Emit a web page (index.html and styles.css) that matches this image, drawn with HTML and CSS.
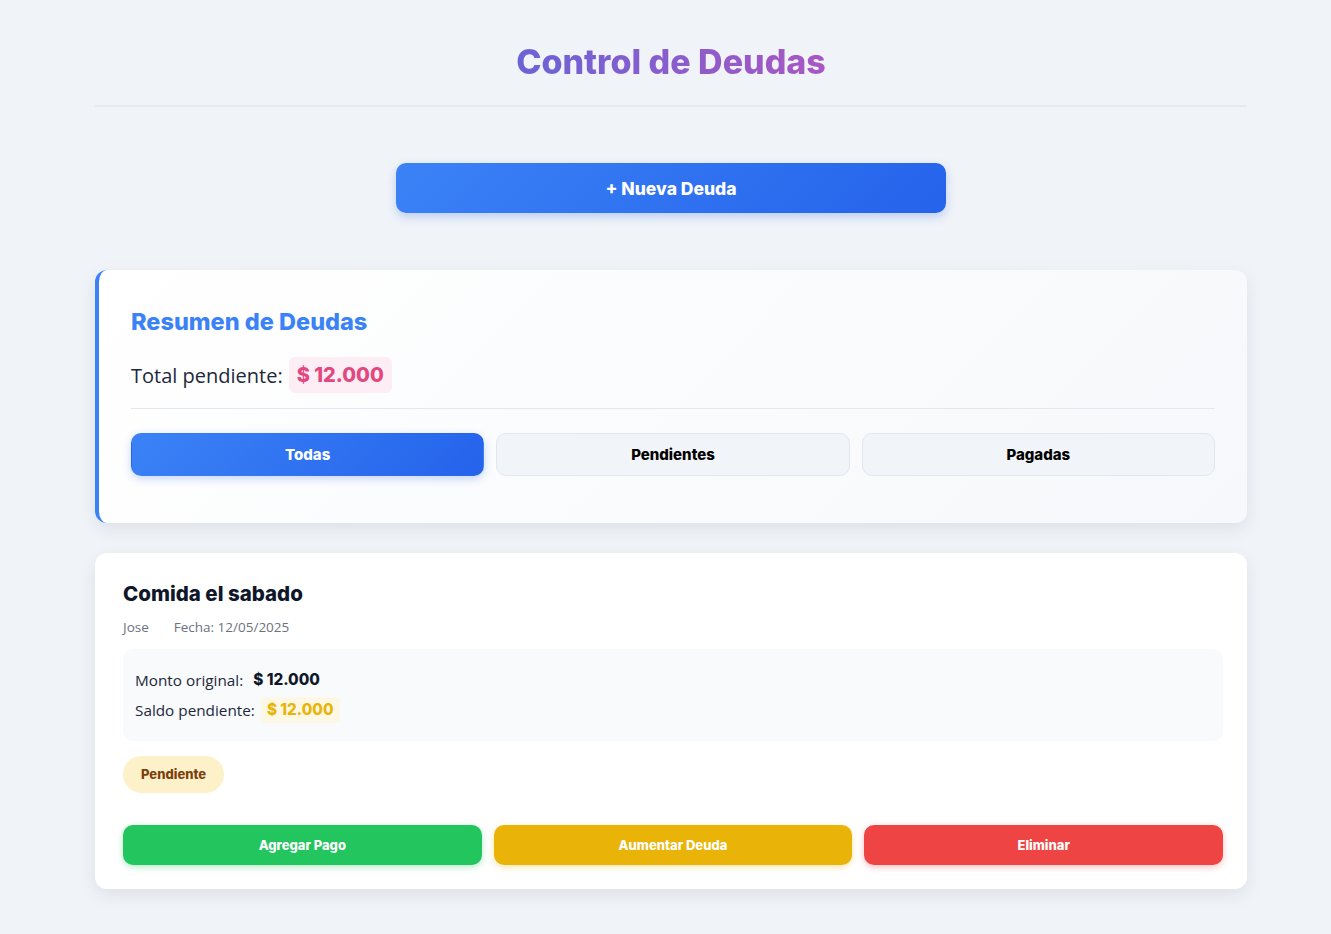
FILE: index.html
```html
<!DOCTYPE html>
<html lang="es">
<head>
<meta charset="utf-8">
<title>Control de Deudas</title>
<link rel="stylesheet" href="styles.css">
</head>
<body>
<div class="container">
  <header class="header">
    <h1 class="title">Control de Deudas</h1>
  </header>
  <div class="new-wrap">
    <button class="btn-new">+ Nueva Deuda</button>
  </div>
  <section class="summary">
    <h2 class="summary-title">Resumen de Deudas</h2>
    <div class="total-row">
      <span class="total-label">Total pendiente:</span>
      <span class="total-amount">$ 12.000</span>
    </div>
    <div class="filters">
      <button class="filter active">Todas</button>
      <button class="filter">Pendientes</button>
      <button class="filter">Pagadas</button>
    </div>
  </section>
  <section class="debt">
    <h3 class="debt-title">Comida el sabado</h3>
    <div class="meta">
      <span>Jose</span>
      <span>Fecha: 12/05/2025</span>
    </div>
    <div class="info">
      <div class="info-row"><span>Monto original:</span><strong class="orig">$ 12.000</strong></div>
      <div class="info-row"><span>Saldo pendiente:</span><strong class="saldo">$ 12.000</strong></div>
    </div>
    <span class="badge">Pendiente</span>
    <div class="actions">
      <button class="act green">Agregar Pago</button>
      <button class="act yellow">Aumentar Deuda</button>
      <button class="act red">Eliminar</button>
    </div>
  </section>
</div>
</body>
</html>
```
FILE: styles.css
```css
* { box-sizing: border-box; }
html, body { margin: 0; padding: 0; }
body {
  background: #f0f3f8;
  font-family: "Open Sans", "Noto Sans", sans-serif;
  color: #1e293b;
  padding-left: 11px;
}
.container {
  max-width: 1152px;
  margin: 0 auto;
}
.header {
  text-align: center;
  padding-top: 39px;
  padding-bottom: 20px;
  border-bottom: 2px solid #e5e9f0;
}
.title {
  margin: 0;
  font-family: "Inter", "Open Sans", sans-serif;
  font-weight: 800;
  font-size: 34px;
  line-height: 46px;
  display: inline-block;
  background: linear-gradient(90deg, #6b63d6, #a857c2);
  -webkit-background-clip: text;
  background-clip: text;
  color: transparent;
}
.new-wrap {
  display: flex;
  justify-content: center;
  padding-top: 56px;
  padding-bottom: 57px;
}
.btn-new {
  width: 550px;
  height: 50px;
  border: none;
  border-radius: 10px;
  background: linear-gradient(135deg, #3b82f6, #2563eb);
  color: #fff;
  font-family: "Inter", "Open Sans", sans-serif;
  font-weight: 800;
  font-size: 17.5px;
  box-shadow: 0 4px 10px rgba(37, 99, 235, 0.25);
}
.summary {
  background: linear-gradient(135deg, #ffffff, #f6f8fb);
  border-left: 4px solid #3b82f6;
  border-radius: 12px;
  padding: 37px 32px 47px 32px;
  box-shadow: 0 6px 18px rgba(15, 23, 42, 0.08);
}
.summary-title {
  margin: 0;
  font-family: "Inter", "Open Sans", sans-serif;
  font-weight: 800;
  font-size: 23.5px;
  line-height: 30px;
  color: #3b82f6;
}
.total-row {
  display: flex;
  align-items: center;
  gap: 6px;
  margin-top: 20px;
  padding-bottom: 15px;
  border-bottom: 1px solid #e2e8f0;
}
.total-label {
  font-size: 20px;
  color: #1e293b;
}
.total-amount {
  background: #fdeef5;
  color: #e2487f;
  font-family: "Inter", "Open Sans", sans-serif;
  font-weight: 800;
  font-size: 20px;
  padding: 4px 8px;
  border-radius: 6px;
  line-height: 28px;
}
.filters {
  display: grid;
  grid-template-columns: 1fr 1fr 1fr;
  gap: 12px;
  margin-top: 24px;
}
.filter {
  height: 43px;
  border: 1px solid #e2e8f0;
  border-radius: 10px;
  background: #f1f5f9;
  color: #000;
  font-family: "Inter", "Open Sans", sans-serif;
  font-weight: 800;
  font-size: 15px;
}
.filter.active {
  background: linear-gradient(135deg, #3b82f6, #2563eb);
  color: #fff;
  border-color: transparent;
  box-shadow: 0 3px 8px rgba(37, 99, 235, 0.25);
}
.debt {
  margin-top: 30px;
  margin-bottom: 40px;
  background: #fff;
  border-radius: 12px;
  padding: 27px 24px 24px 28px;
  box-shadow: 0 6px 18px rgba(15, 23, 42, 0.08);
}
.debt-title {
  margin: 0;
  font-family: "Inter", "Open Sans", sans-serif;
  font-weight: 800;
  font-size: 20.5px;
  line-height: 28px;
  color: #0f172a;
}
.meta {
  display: flex;
  gap: 25px;
  margin-top: 10px;
  font-size: 13.5px;
  color: #6b7280;
}
.info {
  margin-top: 13px;
  background: #f8fafc;
  border-radius: 10px;
  padding: 18px 12px 18px 12px;
}
.info-row {
  display: flex;
  align-items: center;
  gap: 10px;
  font-size: 15.3px;
  line-height: 26px;
  color: #1e293b;
}
.info-row + .info-row { margin-top: 4px; }
.orig {
  font-family: "Inter", "Open Sans", sans-serif;
  font-weight: 800;
  color: #0f172a;
}
.saldo {
  font-family: "Inter", "Open Sans", sans-serif;
  font-weight: 800;
  color: #eab308;
  background: #fdf8e6;
  padding: 0 6px;
  border-radius: 4px;
  margin-left: -4px;
}
.badge {
  display: inline-block;
  margin-top: 15px;
  background: #fdf1c9;
  color: #7c3f0e;
  font-family: "Inter", "Open Sans", sans-serif;
  font-weight: 800;
  font-size: 13px;
  line-height: 37px;
  padding: 0 18px;
  border-radius: 19px;
}
.actions {
  display: grid;
  grid-template-columns: 1fr 1fr 1fr;
  gap: 12px;
  margin-top: 32px;
}
.act {
  height: 40px;
  border: none;
  border-radius: 10px;
  color: #fff;
  font-family: "Inter", "Open Sans", sans-serif;
  font-weight: 800;
  font-size: 13px;
}
.green { background: #22c55e; box-shadow: 0 2px 6px rgba(34, 197, 94, 0.35); }
.yellow { background: #eab308; box-shadow: 0 2px 6px rgba(234, 179, 8, 0.35); }
.red { background: #ef4444; box-shadow: 0 2px 6px rgba(239, 68, 68, 0.35); }
```
